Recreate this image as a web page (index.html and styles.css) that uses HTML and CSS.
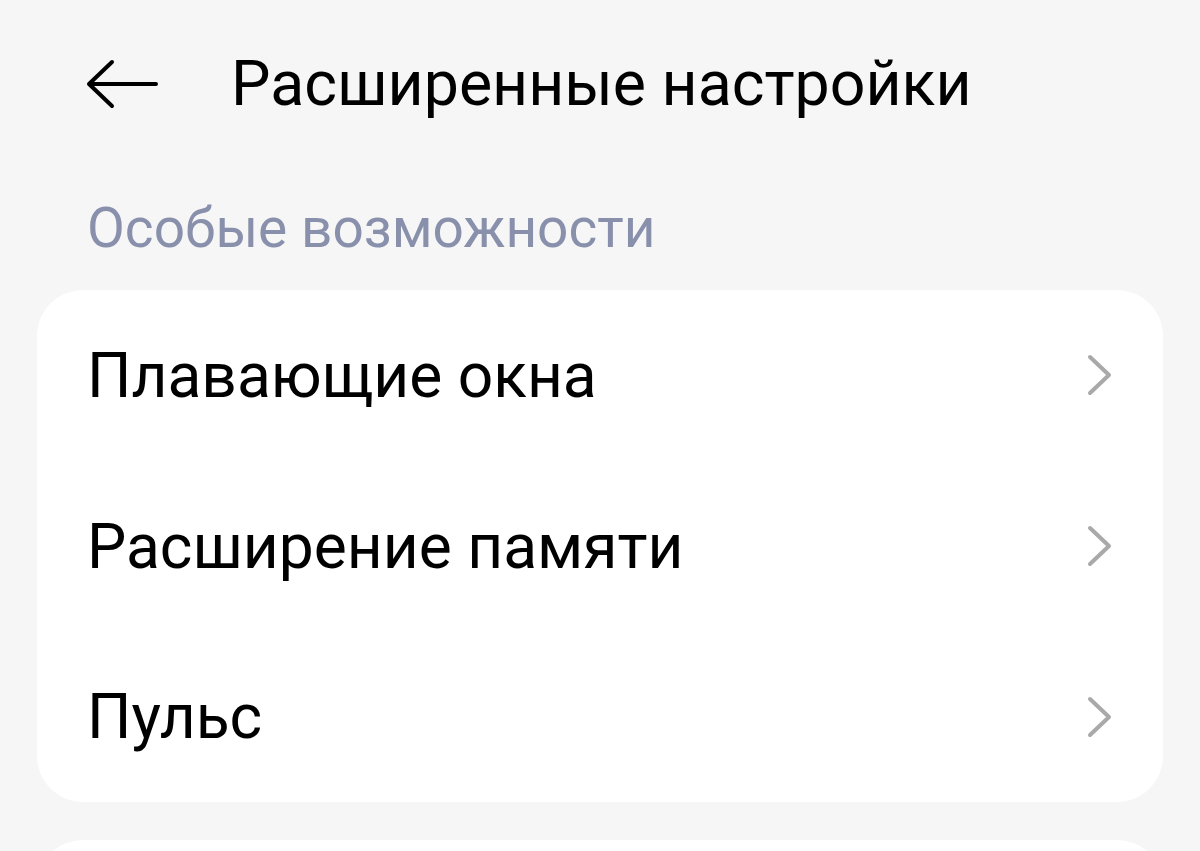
FILE: index.html
```html
<!DOCTYPE html>
<html lang="ru">
<head>
    <meta charset="UTF-8">
    <meta name="viewport" content="width=device-width, initial-scale=1.0">
    <title>Расширенные настройки</title>
    <link rel="stylesheet" href="styles.css">
</head>
<body>
    <div class="topbar">
        <button class="voltar" aria-label="Назад">
            <svg width="72" height="50" viewBox="0 0 72 50">
                <path d="M70 25 H4 M26 3 L3 25 L26 47" fill="none" stroke="#000" stroke-width="4" stroke-linecap="round" stroke-linejoin="round"/>
            </svg>
        </button>
        <h1>Расширенные настройки</h1>
    </div>

    <div class="secao">Особые возможности</div>

    <div class="cartao">
        <div class="linha">
            <span>Плавающие окна</span>
            <svg class="seta" width="26" height="42" viewBox="0 0 26 42"><path d="M3 3 L22 21 L3 39" fill="none" stroke="#a9a9a9" stroke-width="4" stroke-linecap="round" stroke-linejoin="round"/></svg>
        </div>
        <div class="linha">
            <span>Расширение памяти</span>
            <svg class="seta" width="26" height="42" viewBox="0 0 26 42"><path d="M3 3 L22 21 L3 39" fill="none" stroke="#a9a9a9" stroke-width="4" stroke-linecap="round" stroke-linejoin="round"/></svg>
        </div>
        <div class="linha">
            <span>Пульс</span>
            <svg class="seta" width="26" height="42" viewBox="0 0 26 42"><path d="M3 3 L22 21 L3 39" fill="none" stroke="#a9a9a9" stroke-width="4" stroke-linecap="round" stroke-linejoin="round"/></svg>
        </div>
    </div>

    <div class="cartao proximo"></div>
</body>
</html>
```

FILE: styles.css
```css
body {
    margin: 0;
    background-color: #f6f6f6;
    font-family: Roboto, "Noto Sans", sans-serif;
    color: #000;
    overflow: hidden;
}
.topbar {
    display: flex;
    align-items: center;
    height: 64px;
    padding: 52px 0 0 86px;
}
.voltar {
    background: none;
    border: none;
    padding: 0;
    width: 72px;
    height: 50px;
    margin-right: 73px;
    display: flex;
}
h1 {
    margin: 0;
    font-size: 62.6px;
    font-weight: 400;
    line-height: 64px;
}
.secao {
    margin: 84px 0 0 87px;
    font-size: 55px;
    line-height: 56px;
    color: #8990ab;
}
.cartao {
    margin: 34px 37px 0 37px;
    background-color: #fff;
    border-radius: 46px;
}
.linha {
    display: flex;
    justify-content: space-between;
    align-items: center;
    height: 170.7px;
    padding: 0 50px 0 50px;
    font-size: 62.3px;
}
.seta {
    flex-shrink: 0;
}
.proximo {
    margin-top: 38px;
    height: 120px;
}
```
